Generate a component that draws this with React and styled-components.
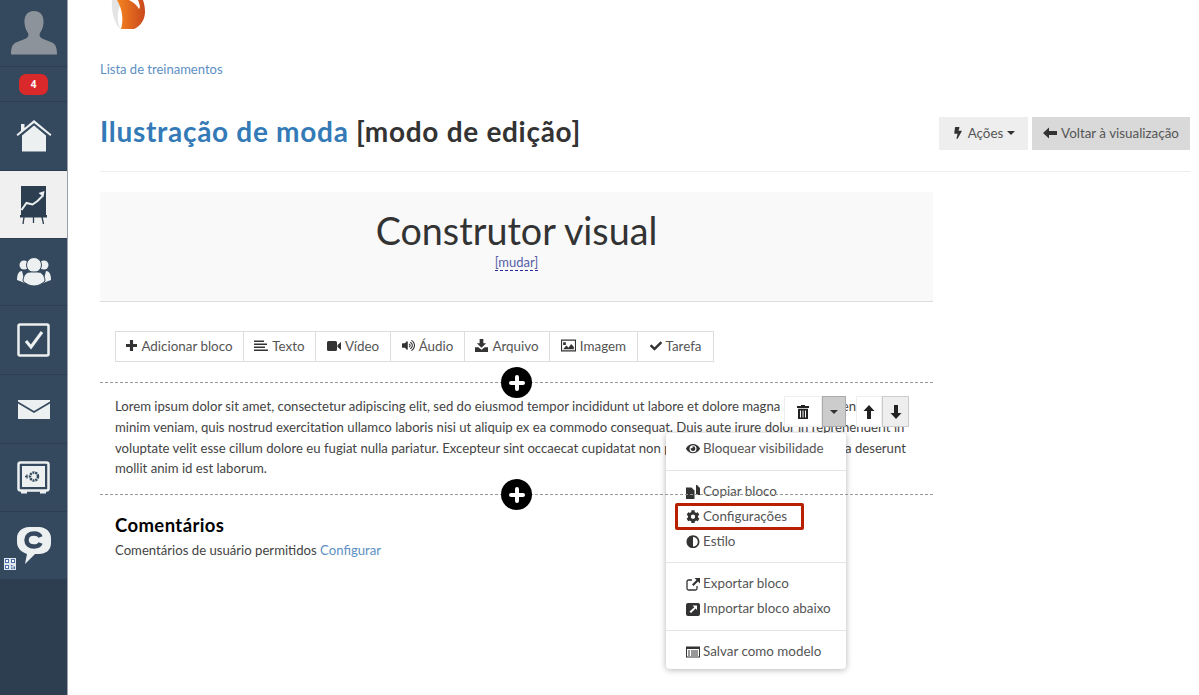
import React from 'react';
import styled, { createGlobalStyle } from 'styled-components';
import { FaVolumeUp, FaCheck, FaEye, FaCog, FaAdjust, FaBolt } from 'react-icons/fa';

const GlobalStyle = createGlobalStyle`
  html, body { margin: 0; padding: 0; height: 100%; overflow: hidden; background: #fff; }
  body { font-family: "Lato", "Open Sans", sans-serif; font-size: 13.4px; color: #444; }
  * { box-sizing: border-box; }
`;

const Glyph = ({ size = 14, children }) => (
  <svg width={size} height={size} viewBox="0 0 14 14" fill="currentColor">{children}</svg>
);
const PlusGlyph = ({ size }) => <Glyph size={size}><path d="M5 0h4v5h5v4H9v5H5V9H0V5h5z" /></Glyph>;
const ArrowLeftGlyph = ({ size }) => <Glyph size={size}><path d="M0 7l6-5.500V5h8v4H6v3.500z" /></Glyph>;
const ArrowUpGlyph = ({ size }) => <Glyph size={size}><path d="M7 0l5.500 6H9v8H5V6H1.500z" /></Glyph>;
const ArrowDownGlyph = ({ size }) => <Glyph size={size}><path d="M7 14l5.500-6H9V0H5v8H1.500z" /></Glyph>;
const LinesGlyph = ({ size }) => <Glyph size={size}><path d="M0 1.500h10v1.500H0zM0 4.500h13v1.500H0zM0 7.500h11v1.500H0zM0 10.500h14V12H0z" /></Glyph>;
const VideoGlyph = ({ size }) => <Glyph size={size}><path d="M1.500 2h7A1.500 1.500 0 0 1 10 3.500v7A1.500 1.500 0 0 1 8.500 12h-7A1.500 1.500 0 0 1 0 10.500v-7A1.500 1.500 0 0 1 1.500 2zM10.500 6L14 3v8l-3.500-3z" /></Glyph>;
const DownloadGlyph = ({ size }) => <Glyph size={size}><path d="M5 0h4v4.500h3L7 9.500 2 4.500h3zM0 9h3.500L7 11.500 10.500 9H14v5H0z" /></Glyph>;
const ImageGlyph = ({ size }) => (
  <Glyph size={size}>
    <path fillRule="evenodd" d="M0 1.500h14v11H0zM1 2.500v9h12v-9z" />
    <path d="M2 10.500l3-3.500 2 2 2.500-3.500 2.500 3v2zM2 4h2.500v2.500H2z" />
  </Glyph>
);
const TrashGlyph = ({ size }) => (
  <Glyph size={size}>
    <path d="M5 0h4v1h4v2H1V1h4z" />
    <path fillRule="evenodd" d="M2 3.800h10V14H2zM4 5.500v7h1v-7zM6.500 5.500v7h1v-7zM9 5.500v7h1v-7z" />
  </Glyph>
);
const CopyGlyph = ({ size }) => <Glyph size={size}><path d="M0 2.500h5.500l3 3V14H0zM10 0h1l3 3v7h-4z" /></Glyph>;
const ExportGlyph = ({ size }) => (
  <Glyph size={size}>
    <path d="M6 3H2.500A1.500 1.500 0 0 0 1 4.500v7A1.500 1.500 0 0 0 2.500 13h7a1.500 1.500 0 0 0 1.500-1.500V9" fill="none" stroke="currentColor" strokeWidth="1.300" />
    <path d="M8.500 1H14v5.500l-2-2-4.500 4.500L6 7.500 10.500 3z" />
  </Glyph>
);
const ImportGlyph = ({ size }) => (
  <Glyph size={size}>
    <path fillRule="evenodd" d="M2 1h10a2 2 0 0 1 2 2v9a2 2 0 0 1-2 2H2a2 2 0 0 1-2-2V3a2 2 0 0 1 2-2zM6.500 3.500l1.800 1.800L3.500 9.500l1.500 1.500 4.500-4.500 1.500 1.500V3.500z" />
  </Glyph>
);
const ListGlyph = ({ size }) => (
  <Glyph size={size}>
    <path fillRule="evenodd" d="M0 1.500h14v11H0zM1 4v7.500h12V4z" />
    <path d="M2 5.500h2v1H2zM5 5.500h7v1H5zM2 7.500h2v1H2zM5 7.500h7v1H5zM2 9.500h2v1H2zM5 9.500h7v1H5z" />
  </Glyph>
);

const AvatarIcon = () => (
  <svg width="46" height="44" viewBox="0 0 46 44">
    <path d="M23 0c7 0 10 5 9.500 12-.3 4-1.500 7-3.500 10-1 2-.5 4 2 5.500l10 4c3 1.500 5 4 5 12H0c0-8 2-10.500 5-12l10-4c2.500-1.500 3-3.500 2-5.500-2-3-3.200-6-3.500-10C13 5 16 0 23 0z" fill="#8d939b" />
  </svg>
);
const HomeIcon = () => (
  <svg width="36" height="32" viewBox="0 0 36 32" fill="#ecf0f1">
    <path d="M18 0L35.500 14.500l-1.200 1.500L18 3 1.700 16 .5 14.500 5 10.800V4h3.500v4z" />
    <path d="M18 5.500l12 10v16H6v-16z" />
  </svg>
);
const EaselIcon = () => (
  <svg width="28" height="38" viewBox="0 0 28 38">
    <rect x="1" y="0" width="25" height="29" fill="#2c3e50" />
    <path d="M1.500 24l5-7 6 1.500 5-3.500 5-5" fill="none" stroke="#ecf0f1" strokeWidth="2" />
    <path d="M18.500 7l6-2-1 6z" fill="#ecf0f1" />
    <rect x="0" y="29" width="27" height="2.500" fill="#2c3e50" />
    <path d="M4 31l-1 7M13.500 31v6M22 31l1.500 7" stroke="#2c3e50" strokeWidth="1.300" />
  </svg>
);
const TeamIcon = () => (
  <svg width="34" height="30" viewBox="0 0 34 30" fill="#ecf0f1">
    <circle cx="7" cy="8" r="4.500" />
    <circle cx="27" cy="8" r="4.500" />
    <path d="M0 23c0-6 2-9 5-9l2 8 1 4z" />
    <path d="M34 23c0-6-2-9-5-9l-2 8-1 4z" />
    <circle cx="17" cy="8" r="7.500" stroke="#34495e" strokeWidth="1" />
    <path d="M6 24c0-6 4-9 7-9h8c3 0 7 3 7 9-3 3-7 5-11 5s-8-2-11-5z" stroke="#34495e" strokeWidth="1" />
  </svg>
);
const CheckIcon = () => (
  <svg width="33" height="34" viewBox="0 0 33 34">
    <rect x="1.500" y="1.500" width="30" height="31" rx="1.500" fill="none" stroke="#ecf0f1" strokeWidth="2.500" />
    <path d="M9 18l5 6L25 9" fill="none" stroke="#ecf0f1" strokeWidth="3" />
  </svg>
);
const MailIcon = () => (
  <svg width="32" height="20" viewBox="0 0 32 20" fill="#ecf0f1">
    <path d="M0 1.500L16 11 32 1.500V0H0z" transform="translate(0 1)" />
    <path d="M0 4.500v15.500h32V4.500L16 14z" />
  </svg>
);
const SafeIcon = () => (
  <svg width="33" height="33" viewBox="0 0 33 33">
    <rect x="1.500" y="1.500" width="30" height="28" rx="2" fill="#34495e" stroke="#ecf0f1" strokeWidth="2.500" />
    <rect x="5" y="5" width="23" height="21" fill="#ecf0f1" />
    <circle cx="17" cy="15.500" r="4" fill="none" stroke="#34495e" strokeWidth="2.500" strokeDasharray="2 .8" />
    <path d="M8 15.500h2M10 13.500v4" stroke="#34495e" strokeWidth="1.300" />
    <rect x="4" y="30" width="6" height="2.500" fill="#ecf0f1" />
    <rect x="23" y="30" width="6" height="2.500" fill="#ecf0f1" />
  </svg>
);
const ChatIcon = () => (
  <svg width="34" height="38" viewBox="0 0 34 38">
    <path d="M12 0h10c7 0 12 5 12 11v5c0 7-5 11-12 11h-4l-10 10 2-10C5 25 0 22 0 15v-4C0 5 5 0 12 0z" fill="#ecf0f1" />
    <path d="M23.500 10c-1-2.500-3.500-3.500-6.500-3.500-4.500 0-7.500 2.500-7.500 6.500s3 6.500 7.500 6.500c3 0 5.500-1 6.500-3.500" fill="none" stroke="#34495e" strokeWidth="4.500" />
  </svg>
);
const QrIcon = () => (
  <svg width="12" height="12" viewBox="0 0 12 12">
    <rect width="12" height="12" fill="#dfe6ee" />
    <path d="M1 1h4v4H1zM7 1h4v4H7zM1 7h4v4H1zM7 7h1.500v1.500H7zM9.500 8.500H11V11H9.500zM7 9.500h1.500V11H7z" fill="#4a6fa8" />
    <path d="M2 2h2v2H2zM8 2h2v2H8zM2 8h2v2H2z" fill="#fff" />
  </svg>
);
const LogoIcon = () => (
  <svg width="38" height="30" viewBox="0 0 38 30">
    <defs>
      <linearGradient id="flame" x1="0" x2="1" y1="0" y2="0">
        <stop offset="0" stopColor="#f58420" />
        <stop offset="1" stopColor="#c9481c" />
      </linearGradient>
    </defs>
    <path d="M3 0h12c-5 6-9 14-4 29C6 24 2 12 3 0z" fill="#e4e4e4" />
    <path d="M8 0c5 8 7 20 4 29h13c7-3 11-10 11-17 0-5-1-9-2-12h-5c1 3 3 7 1 9-2-4-6-7-10-9z" fill="url(#flame)" />
  </svg>
);

const Page = styled.div`
  display: flex;
  height: 695px;
`;

const Sidebar = styled.nav`
  width: 68px;
  flex: none;
  display: flex;
  flex-direction: column;
  background: #2c3e50;
  border-right: 1px solid #9aa3ad;
`;

const NavItem = styled.div`
  position: relative;
  height: ${p => p.$h}px;
  display: flex;
  align-items: center;
  justify-content: center;
  background: ${p => (p.$active ? '#f0f0f0' : '#34495e')};
  border-bottom: 1px solid #2c3e50;
`;

const Badge = styled.span`
  background: #d9292b;
  color: #fff;
  font: 700 10px/1 "Open Sans", sans-serif;
  width: 29px;
  height: 21px;
  border-radius: 7px;
  display: flex;
  align-items: center;
  justify-content: center;
`;

const QrMark = styled.span`
  position: absolute;
  left: 4px;
  bottom: 9px;
  display: flex;
`;

const Main = styled.main`
  flex: 1;
  min-width: 0;
  padding: 0 9px 0 32px;
`;

const LogoRow = styled.div`
  height: 30px;
  padding-left: 9px;
`;

const Crumb = styled.a`
  display: block;
  margin-top: 30px;
  font-size: 13px;
  line-height: 18px;
  color: #5d8fc4;
`;

const HeaderRow = styled.header`
  margin-top: 39px;
  display: flex;
  justify-content: space-between;
  align-items: center;
  padding-bottom: 21px;
  border-bottom: 1px solid #eee;
`;

const Title = styled.h1`
  margin: 0 0 4px;
  font-size: 28px;
  line-height: 29px;
  letter-spacing: 0.7px;
  font-weight: 700;
  color: #333;
`;

const TitleLink = styled.span`
  color: #337ab7;
`;

const HeaderActions = styled.div`
  display: flex;
  gap: 4px;
`;

const HeadButton = styled.button`
  height: 33px;
  width: ${p => p.$w}px;
  border: 0;
  padding: 0 0 2px;
  background: ${p => (p.$dark ? '#d9d9d9' : '#eee')};
  color: #555;
  font: inherit;
  display: flex;
  align-items: center;
  justify-content: center;
  gap: 4px;
  svg { color: #333; }
`;

const Caret = styled.span`
  width: 0;
  height: 0;
  border-top: 4px solid #333;
  border-left: 4px solid transparent;
  border-right: 4px solid transparent;
`;

const Builder = styled.section`
  width: 833px;
  margin-top: 20px;
`;

const Jumbo = styled.div`
  height: 110px;
  background: #f9f9f9;
  border-bottom: 1px solid #ddd;
  text-align: center;
  padding-top: 15px;
`;

const JumboTitle = styled.h2`
  margin: 0;
  font-size: 37.7px;
  line-height: 47px;
  font-weight: 400;
  color: #333;
`;

const ChangeLink = styled.a`
  display: inline-block;
  font-size: 13px;
  line-height: 16px;
  color: #555ea8;
  border-bottom: 1px dashed #2a2a9a;
`;

const Toolbar = styled.div`
  margin: 29px 0 20px 15px;
  display: flex;
  width: fit-content;
  height: 31px;
  border: 1px solid #ddd;
`;

const ToolButton = styled.div`
  width: ${p => p.$w}px;
  padding-bottom: 2px;
  display: flex;
  align-items: center;
  justify-content: center;
  gap: 4px;
  color: #555;
  border-left: ${p => (p.$first ? '0' : '1px solid #ddd')};
  svg { color: #333; }
`;

const Divider = styled.div`
  position: relative;
  border-top: 1px dashed #999;
  height: 0;
`;

const AddCircle = styled.span`
  position: absolute;
  left: 401px;
  top: -16px;
  width: 31px;
  height: 31px;
  border-radius: 50%;
  background: #000;
  display: flex;
  align-items: center;
  justify-content: center;
  &::before, &::after {
    content: '';
    position: absolute;
    background: #fff;
    border-radius: 2px;
  }
  &::before { width: 16px; height: 4px; }
  &::after { width: 4px; height: 16px; }
`;

const ContentBlock = styled.div`
  position: relative;
  padding: 13px 15px 15px;
  font-size: 13.15px;
  line-height: 20.8px;
  white-space: nowrap;
  color: #444;
`;

const BlockActions = styled.div`
  position: absolute;
  top: 13px;
  left: 684px;
  display: flex;
  height: 31px;
  font-size: 13.4px;
`;

const ActionButton = styled.div`
  width: ${p => p.$w}px;
  margin-left: ${p => p.$gap || 0}px;
  display: flex;
  align-items: center;
  justify-content: center;
  color: #222;
  background: ${p => (p.$pressed ? '#ccc' : p.$soft ? '#eee' : '#fff')};
  border: 1px solid ${p => (p.$pressed ? '#aaa' : p.$soft ? '#ccc' : '#eee')};
`;

const Menu = styled.div`
  position: absolute;
  top: 37px;
  left: -118px;
  width: 180px;
  padding: 3px 0 5px;
  background: #fff;
  border-radius: 4px;
  box-shadow: 0 1px 6px rgba(0, 0, 0, 0.3);
`;

const MenuItem = styled.div`
  position: relative;
  height: 25px;
  padding-left: 20px;
  display: flex;
  align-items: center;
  gap: 3px;
  color: #555;
  svg { color: #333; width: 14px; flex: none; }
  ${p => p.$marked && `
    &::after {
      content: '';
      box-sizing: border-box;
      position: absolute;
      left: 9px;
      top: -1px;
      width: 129px;
      height: 27px;
      border: 3px solid #b92000;
      border-radius: 2px;
    }
  `}
`;

const MenuRule = styled.div`
  height: 1px;
  margin: ${p => p.$top}px 0 8px;
  background: #e5e5e5;
`;

const Comments = styled.div`
  padding: 19px 15px 0;
`;

const CommentsTitle = styled.h3`
  margin: 0;
  font-size: 18.5px;
  letter-spacing: 0.4px;
  line-height: 22px;
  font-weight: 700;
  color: #000;
`;

const CommentsNote = styled.p`
  margin: 4px 0 0;
  font-size: 13.15px;
  line-height: 20px;
  color: #444;
`;

const ConfigLink = styled.a`
  color: #5d8fc4;
`;

const navItems = [
  { h: 67, icon: <AvatarIcon /> },
  { h: 35, icon: <Badge>4</Badge> },
  { h: 69, icon: <HomeIcon /> },
  { h: 68, icon: <EaselIcon />, active: true },
  { h: 67, icon: <TeamIcon /> },
  { h: 69, icon: <CheckIcon /> },
  { h: 69, icon: <MailIcon /> },
  { h: 68, icon: <SafeIcon /> },
  { h: 68, icon: <ChatIcon />, extra: <QrMark><QrIcon /></QrMark> },
];

const tools = [
  { w: 127, label: 'Adicionar bloco', icon: <PlusGlyph size={11} /> },
  { w: 72, label: 'Texto', icon: <LinesGlyph size={14} /> },
  { w: 75, label: 'Vídeo', icon: <VideoGlyph size={14} /> },
  { w: 74, label: 'Áudio', icon: <FaVolumeUp size={13} /> },
  { w: 85, label: 'Arquivo', icon: <DownloadGlyph size={13} /> },
  { w: 88, label: 'Imagem', icon: <ImageGlyph size={15} /> },
  { w: 76, label: 'Tarefa', icon: <FaCheck size={12} /> },
];

const App = () => {
  return (
    <>
      <GlobalStyle />
      <Page>
        <Sidebar>
          {navItems.map((item, i) => (
            <NavItem key={i} $h={item.h} $active={item.active}>
              {item.icon}
              {item.extra}
            </NavItem>
          ))}
        </Sidebar>
        <Main>
          <LogoRow><LogoIcon /></LogoRow>
          <Crumb>Lista de treinamentos</Crumb>
          <HeaderRow>
            <Title><TitleLink>Ilustração de moda</TitleLink> [modo de edição]</Title>
            <HeaderActions>
              <HeadButton $w={89}><FaBolt size={12} /> Ações <Caret /></HeadButton>
              <HeadButton $w={158} $dark><ArrowLeftGlyph size={14} /> Voltar à visualização</HeadButton>
            </HeaderActions>
          </HeaderRow>
          <Builder>
            <Jumbo>
              <JumboTitle>Construtor visual</JumboTitle>
              <ChangeLink>[mudar]</ChangeLink>
            </Jumbo>
            <Toolbar>
              {tools.map((t, i) => (
                <ToolButton key={t.label} $w={t.w} $first={i === 0}>{t.icon} {t.label}</ToolButton>
              ))}
            </Toolbar>
            <Divider><AddCircle /></Divider>
            <ContentBlock>
              Lorem ipsum dolor sit amet, consectetur adipiscing elit, sed do eiusmod tempor incididunt ut labore et dolore magna aliqua. Ut enim ad<br />
              minim veniam, quis nostrud exercitation ullamco laboris nisi ut aliquip ex ea commodo consequat. Duis aute irure dolor in reprehenderit in<br />
              voluptate velit esse cillum dolore eu fugiat nulla pariatur. Excepteur sint occaecat cupidatat non proident, sunt in culpa qui officia deserunt<br />
              mollit anim id est laborum.
              <BlockActions>
                <ActionButton $w={38}><TrashGlyph size={14} /></ActionButton>
                <ActionButton $w={24} $pressed><Caret /></ActionButton>
                <ActionButton $w={26} $gap={10}><ArrowUpGlyph size={14} /></ActionButton>
                <ActionButton $w={27} $soft><ArrowDownGlyph size={14} /></ActionButton>
                <Menu>
                  <MenuItem><FaEye /> Bloquear visibilidade</MenuItem>
                  <MenuRule $top={9} />
                  <MenuItem><CopyGlyph /> Copiar bloco</MenuItem>
                  <MenuItem $marked><FaCog /> Configurações</MenuItem>
                  <MenuItem><FaAdjust /> Estilo</MenuItem>
                  <MenuRule $top={8} />
                  <MenuItem><ExportGlyph /> Exportar bloco</MenuItem>
                  <MenuItem><ImportGlyph /> Importar bloco abaixo</MenuItem>
                  <MenuRule $top={9} />
                  <MenuItem><ListGlyph /> Salvar como modelo</MenuItem>
                </Menu>
              </BlockActions>
            </ContentBlock>
            <Divider><AddCircle /></Divider>
            <Comments>
              <CommentsTitle>Comentários</CommentsTitle>
              <CommentsNote>Comentários de usuário permitidos <ConfigLink>Configurar</ConfigLink></CommentsNote>
            </Comments>
          </Builder>
        </Main>
      </Page>
    </>
  );
};

export default App;
